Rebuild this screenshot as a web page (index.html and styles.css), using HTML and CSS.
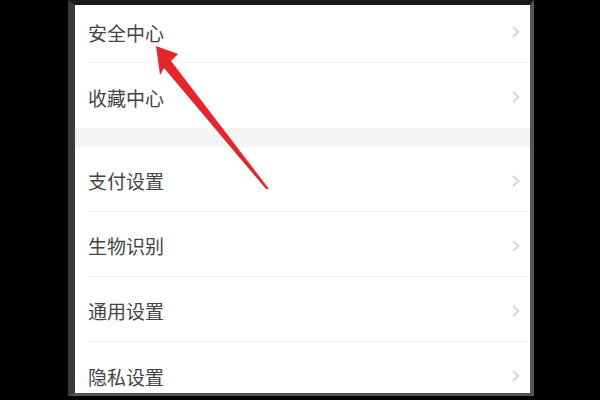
FILE: index.html
```html
<!DOCTYPE html>
<html lang="zh">
<head>
<meta charset="utf-8">
<link rel="stylesheet" href="styles.css">
</head>
<body>
<div class="frame">
  <div class="screen">
    <div class="group">
      <div class="row first"><span class="label">安全中心</span><svg class="chev" viewBox="0 0 8 12"><path d="M1 1 L6.5 6 L1 11" /></svg></div>
      <div class="row"><span class="label">收藏中心</span><svg class="chev" viewBox="0 0 8 12"><path d="M1 1 L6.5 6 L1 11" /></svg></div>
    </div>
    <div class="band"></div>
    <div class="group">
      <div class="row"><span class="label">支付设置</span><svg class="chev" viewBox="0 0 8 12"><path d="M1 1 L6.5 6 L1 11" /></svg></div>
      <div class="row"><span class="label">生物识别</span><svg class="chev" viewBox="0 0 8 12"><path d="M1 1 L6.5 6 L1 11" /></svg></div>
      <div class="row"><span class="label">通用设置</span><svg class="chev" viewBox="0 0 8 12"><path d="M1 1 L6.5 6 L1 11" /></svg></div>
      <div class="row last"><span class="label">隐私设置</span><svg class="chev" viewBox="0 0 8 12"><path d="M1 1 L6.5 6 L1 11" /></svg></div>
    </div>
  </div>
</div>
<svg class="arrow" width="600" height="400" viewBox="0 0 600 400">
  <polygon points="156,46 178,54 171,61 269,189 266,189 164,68 160,75" fill="#e8242a"/>
</svg>
</body>
</html>
```
FILE: styles.css
```css
html, body {
  margin: 0;
  padding: 0;
  background: #000;
  width: 600px;
  height: 400px;
  overflow: hidden;
  position: relative;
  font-family: "Noto Sans CJK SC", "Noto Sans", sans-serif;
}
.frame {
  margin-left: 68px;
  width: 466px;
  height: 396px;
  box-sizing: border-box;
  border-left: 7px solid #3b3a3a;
  border-right: 4px solid #555;
  border-top: 5px solid #1a1a1a;
  border-bottom: 3px solid #555;
}
.screen {
  background: #fff;
  height: 100%;
  overflow: hidden;
}
.row {
  height: 65px;
  display: flex;
  align-items: center;
  justify-content: space-between;
  margin-left: 13px;
  padding-right: 10px;
  border-bottom: 1px solid #f1f1f1;
  box-sizing: border-box;
  padding-top: 3px;
}
.row.first {
  height: 58px;
  padding-top: 0;
  padding-bottom: 3px;
}
.group .row:last-child {
  border-bottom: none;
}
.label {
  font-size: 19px;
  color: #454545;
  line-height: 1;
}
.chev {
  width: 8px;
  height: 12px;
  fill: none;
  stroke: #d4d4d4;
  stroke-width: 1.8;
}
.band {
  height: 19px;
  background: #f4f4f4;
}
.arrow {
  position: absolute;
  left: 0;
  top: 0;
}
```
